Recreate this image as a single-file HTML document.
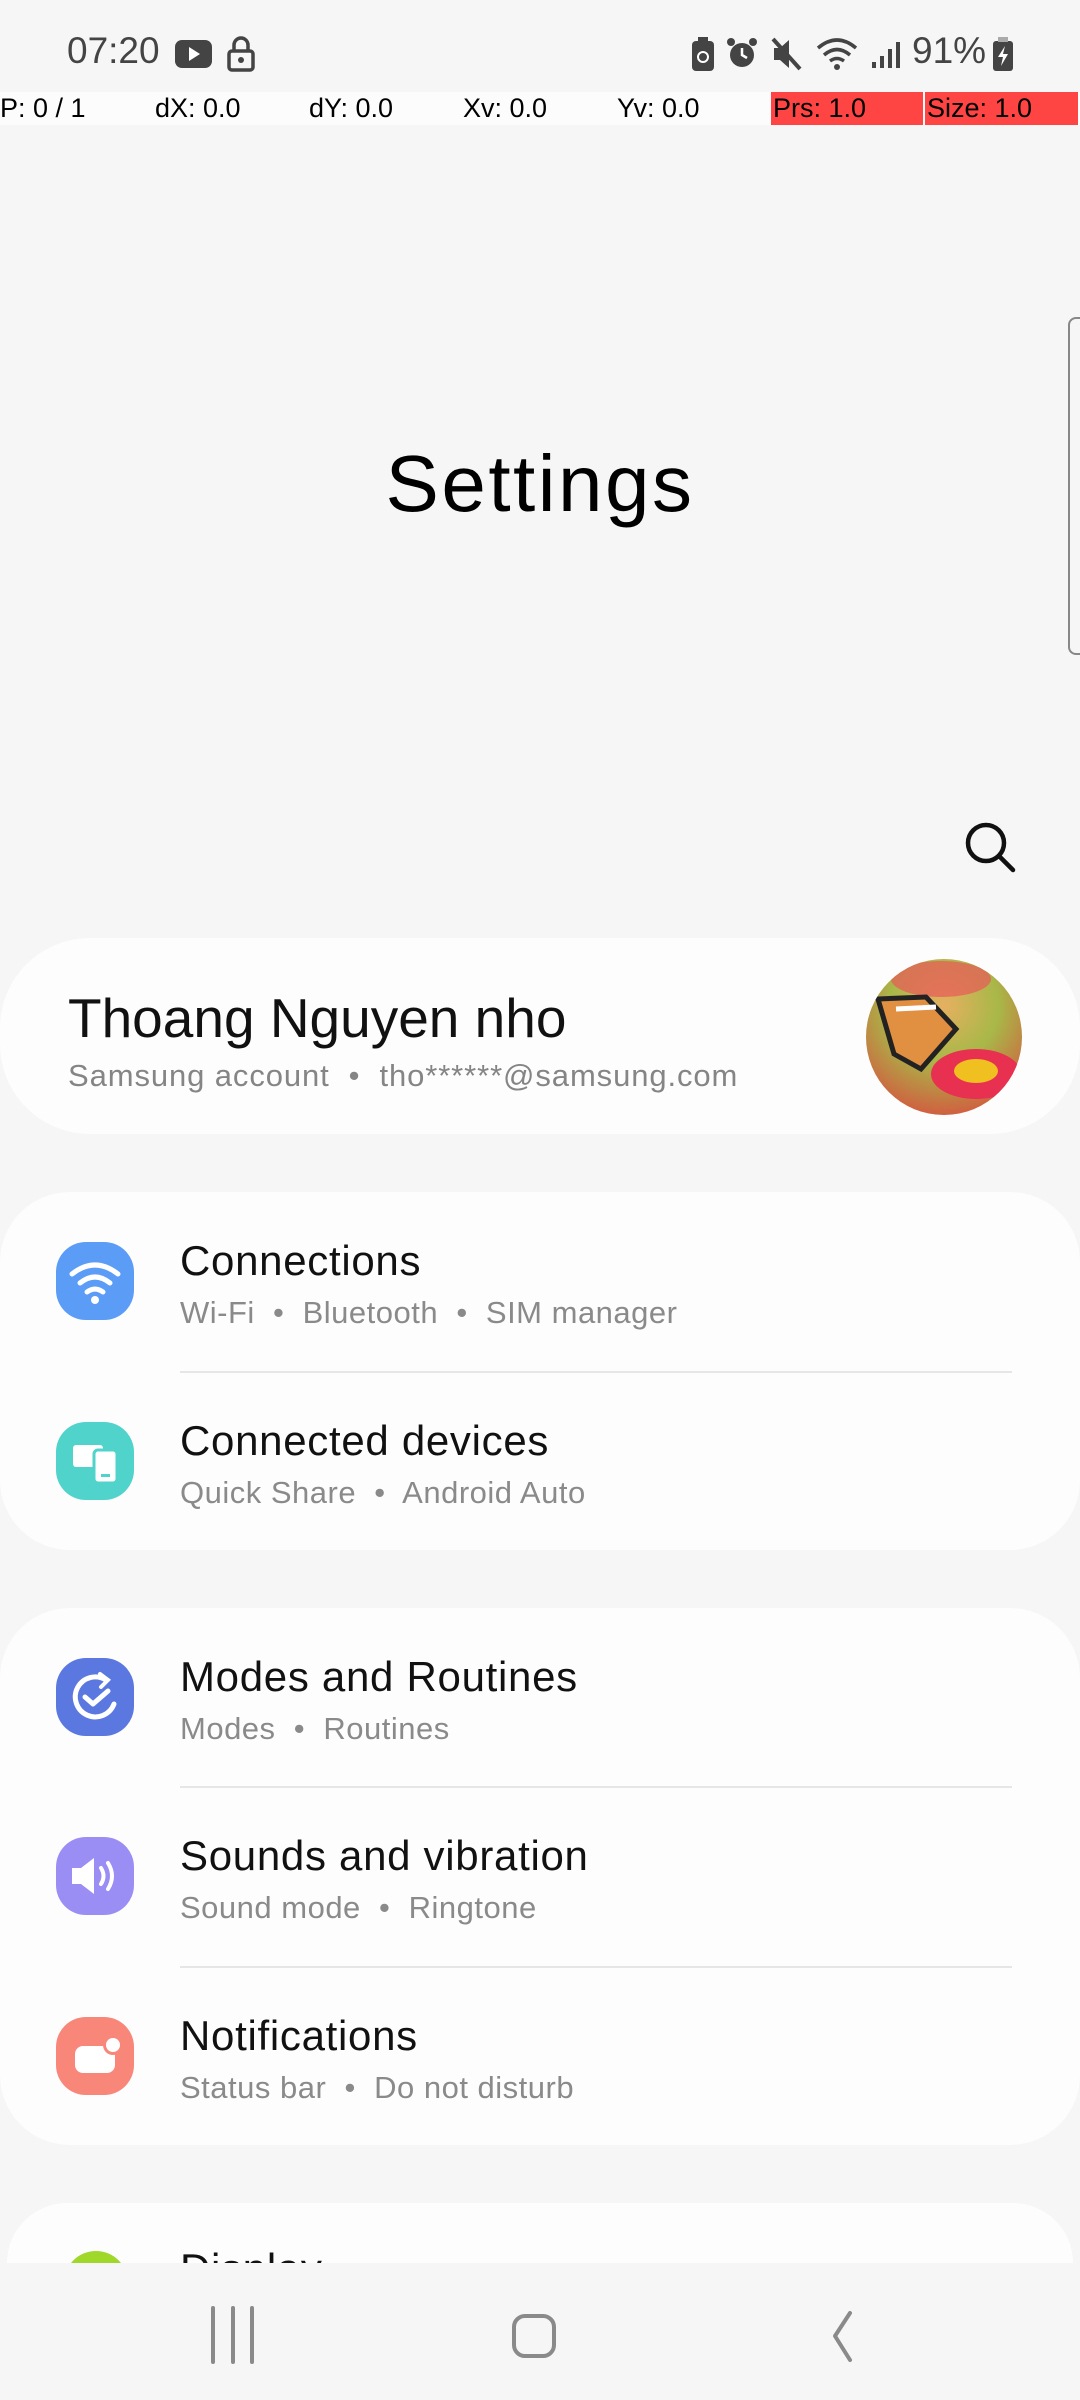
<!DOCTYPE html>
<html><head><meta charset="utf-8">
<style>
*{margin:0;padding:0;box-sizing:border-box}
body{width:1080px;height:2400px;background:#f6f6f6;font-family:"Liberation Sans",sans-serif;position:relative;overflow:hidden;color:#000}
.abs{position:absolute}
.card{position:absolute;left:0;width:1080px;background:#fdfdfd;border-radius:70px}
.t{position:absolute;left:180px;font-size:42px;color:#111;white-space:nowrap;letter-spacing:0.7px}
.s{position:absolute;left:180px;font-size:31px;color:#8a8a8a;white-space:nowrap;letter-spacing:0.5px}
.ic{position:absolute;left:56px;width:78px;height:78px;border-radius:30px}
.div{position:absolute;left:180px;width:832px;height:2px;background:#e6e6e6}
.dbg{position:absolute;top:92px;height:33px;font-size:27px;line-height:33px;color:#000;background:#fcfcfc}
</style></head><body>
<!-- status bar -->
<div class="abs" style="left:67px;top:30px;font-size:37px;color:#444">07:20</div>
<svg class="abs" style="left:174px;top:38px" width="40" height="32"><rect x="1" y="2" width="37" height="28" rx="7" fill="#444"/><path d="M15 9 L26 16 L15 23Z" fill="#fff"/></svg>
<svg class="abs" style="left:226px;top:34px" width="30" height="38"><path d="M8 17 V11 a7 7 0 0 1 14 0 V17" fill="none" stroke="#444" stroke-width="3.5"/><rect x="3" y="17" width="24" height="19" rx="3" fill="none" stroke="#444" stroke-width="3.5"/><circle cx="15" cy="26" r="3" fill="#444"/></svg>
<svg class="abs" style="left:690px;top:36px" width="26" height="36"><rect x="2" y="5" width="22" height="30" rx="4" fill="#444"/><rect x="8" y="1" width="10" height="5" fill="#444"/><circle cx="13" cy="21" r="5" fill="none" stroke="#fff" stroke-width="2"/></svg>
<svg class="abs" style="left:725px;top:36px" width="34" height="36"><circle cx="17" cy="19" r="12" fill="#444"/><path d="M17 12 V19 L22 22" stroke="#fff" stroke-width="2.5" fill="none"/><circle cx="6" cy="6" r="4" fill="#444"/><circle cx="28" cy="6" r="4" fill="#444"/></svg>
<svg class="abs" style="left:770px;top:36px" width="34" height="36"><path d="M4 12 H10 L19 4 V32 L10 24 H4Z" fill="#444"/><path d="M3 3 L30 33" stroke="#444" stroke-width="4"/></svg>
<svg class="abs" style="left:815px;top:36px" width="44" height="36"><path d="M3 12 Q22 -4 41 12" fill="none" stroke="#444" stroke-width="3.5"/><path d="M9 19 Q22 8 35 19" fill="none" stroke="#444" stroke-width="3.5"/><path d="M15 25 Q22 20 29 25" fill="none" stroke="#444" stroke-width="3.5"/><circle cx="22" cy="31" r="3" fill="#444"/></svg>
<svg class="abs" style="left:870px;top:40px" width="32" height="30"><rect x="2" y="22" width="4" height="6" fill="#444"/><rect x="10" y="16" width="4" height="12" fill="#444"/><rect x="18" y="9" width="4" height="19" fill="#444"/><rect x="26" y="2" width="4" height="26" fill="#444"/></svg>
<div class="abs" style="left:912px;top:30px;font-size:37px;color:#444">91%</div>
<svg class="abs" style="left:990px;top:36px" width="26" height="36"><rect x="3" y="5" width="20" height="30" rx="3" fill="#444"/><rect x="8" y="1" width="10" height="5" fill="#aaa"/><path d="M15 10 L8 21 H13 L11 30 L18 18 H13Z" fill="#fff"/></svg>
<!-- debug bar -->
<div class="dbg" style="left:0;width:1080px"></div>
<div class="dbg" style="left:0">P: 0 / 1</div>
<div class="dbg" style="left:155px">dX: 0.0</div>
<div class="dbg" style="left:309px">dY: 0.0</div>
<div class="dbg" style="left:463px">Xv: 0.0</div>
<div class="dbg" style="left:617px">Yv: 0.0</div>
<div class="dbg" style="left:771px;width:152px;background:#f44;padding-left:2px">Prs: 1.0</div>
<div class="dbg" style="left:925px;width:153px;background:#f44;padding-left:2px">Size: 1.0</div>
<!-- scrollbar -->
<div class="abs" style="left:1068px;top:317px;width:14px;height:338px;border:2px solid #888;border-right:none;border-radius:8px 0 0 8px"></div>
<!-- title -->
<div class="abs" style="left:0;width:1080px;top:438px;text-align:center;font-size:80px;color:#000;letter-spacing:2.5px">Settings</div>
<svg class="abs" style="left:960px;top:818px" width="60" height="60"><circle cx="26" cy="25" r="18" fill="none" stroke="#111" stroke-width="4.5"/><path d="M39 38 L53 52" stroke="#111" stroke-width="4.5" stroke-linecap="round"/></svg>
<!-- account card -->
<div class="card" style="top:938px;height:196px;border-radius:90px"></div>
<div class="abs" style="left:68px;top:986px;font-size:55px;color:#111">Thoang Nguyen nho</div>
<div class="abs" style="left:68px;top:1058px;font-size:31px;color:#858585;letter-spacing:0.9px">Samsung account &nbsp;•&nbsp; tho******@samsung.com</div>
<svg class="abs" style="left:866px;top:959px" width="156" height="156">
<defs><radialGradient id="bg" cx="50%" cy="30%" r="70%"><stop offset="0" stop-color="#e6b060"/><stop offset="0.5" stop-color="#a8b848"/><stop offset="1" stop-color="#d06040"/></radialGradient><clipPath id="cp"><circle cx="78" cy="78" r="78"/></clipPath></defs>
<g clip-path="url(#cp)"><rect width="156" height="156" fill="url(#bg)"/><ellipse cx="75" cy="20" rx="50" ry="18" fill="#e85858" opacity=".7"/><ellipse cx="110" cy="115" rx="45" ry="25" fill="#e83050"/><ellipse cx="110" cy="112" rx="22" ry="12" fill="#f0c020"/><path d="M12 40 L60 38 L90 70 L55 110 L28 95Z" fill="#e09040" stroke="#222" stroke-width="5"/><path d="M30 50 L70 48" stroke="#fff" stroke-width="5"/></g></svg>
<!-- card 2 -->
<div class="card" style="top:1192px;height:358px"></div>
<div class="ic" style="top:1242px;background:#5b9cf6"></div>
<svg class="abs" style="left:56px;top:1242px" width="78" height="78"><path d="M16 32 Q39 14 62 32" fill="none" stroke="#fff" stroke-width="5" stroke-linecap="round"/><path d="M24 41 Q39 29 54 41" fill="none" stroke="#fff" stroke-width="5" stroke-linecap="round"/><path d="M31 50 Q39 44 47 50" fill="none" stroke="#fff" stroke-width="5" stroke-linecap="round"/><circle cx="39" cy="58" r="4" fill="#fff"/></svg>
<div class="t" style="top:1237px">Connections</div>
<div class="s" style="top:1295px">Wi-Fi &nbsp;•&nbsp; Bluetooth &nbsp;•&nbsp; SIM manager</div>
<div class="div" style="top:1371px"></div>
<div class="ic" style="top:1422px;background:#4fd3cb"></div>
<svg class="abs" style="left:56px;top:1422px" width="78" height="78"><rect x="17" y="23" width="30" height="22" rx="3" fill="#fff"/><rect x="38" y="28" width="23" height="33" rx="4" fill="#fff" stroke="#4fd3cb" stroke-width="3"/><rect x="45" y="52" width="9" height="3" fill="#4fd3cb"/></svg>
<div class="t" style="top:1417px">Connected devices</div>
<div class="s" style="top:1475px">Quick Share &nbsp;•&nbsp; Android Auto</div>
<!-- card 3 -->
<div class="card" style="top:1608px;height:537px"></div>
<div class="ic" style="top:1658px;background:#5a78e0"></div>
<svg class="abs" style="left:56px;top:1658px" width="78" height="78"><path d="M50 22 A20 20 0 1 0 58 46" fill="none" stroke="#fff" stroke-width="5" stroke-linecap="round"/><path d="M44 16 L52 22 L45 29" fill="none" stroke="#fff" stroke-width="4" stroke-linecap="round"/><path d="M29 39 L37 46 L52 33" fill="none" stroke="#fff" stroke-width="5" stroke-linecap="round" stroke-linejoin="round"/></svg>
<div class="t" style="top:1653px">Modes and Routines</div>
<div class="s" style="top:1711px">Modes &nbsp;•&nbsp; Routines</div>
<div class="div" style="top:1786px"></div>
<div class="ic" style="top:1837px;background:#9a8ef5"></div>
<svg class="abs" style="left:56px;top:1837px" width="78" height="78"><path d="M16 31 H25 L38 21 V57 L25 47 H16Z" fill="#fff"/><path d="M45 31 Q50 39 45 47" fill="none" stroke="#fff" stroke-width="4" stroke-linecap="round"/><path d="M52 26 Q60 39 52 52" fill="none" stroke="#fff" stroke-width="4" stroke-linecap="round"/></svg>
<div class="t" style="top:1832px">Sounds and vibration</div>
<div class="s" style="top:1890px">Sound mode &nbsp;•&nbsp; Ringtone</div>
<div class="div" style="top:1966px"></div>
<div class="ic" style="top:2017px;background:#f8877a"></div>
<svg class="abs" style="left:56px;top:2017px" width="78" height="78"><rect x="19" y="29" width="40" height="27" rx="8" fill="#fff"/><circle cx="57" cy="28" r="10" fill="#f8877a"/><circle cx="57" cy="28" r="7" fill="#fff"/></svg>
<div class="t" style="top:2012px">Notifications</div>
<div class="s" style="top:2070px">Status bar &nbsp;•&nbsp; Do not disturb</div>
<!-- card 4 partial -->
<div class="abs" style="left:0;top:2203px;width:1080px;height:60px;overflow:hidden">
<div class="abs" style="left:7px;top:0;width:1066px;height:130px;background:#fdfdfd;border-radius:60px"></div>
<div class="abs" style="left:64px;top:48px;width:64px;height:64px;border-radius:32px;background:#9fd82a"></div>
<div class="abs" style="left:180px;top:42px;font-size:42px;color:#111;letter-spacing:0.7px">Display</div>
</div>
<!-- nav -->
<div class="abs" style="left:0;top:2263px;width:1080px;height:137px;background:#f6f6f6"></div>
<svg class="abs" style="left:200px;top:2300px" width="70" height="70"><path d="M13 8 V62 M33 8 V62 M52 8 V62" stroke="#8a8a8a" stroke-width="4" stroke-linecap="round"/></svg>
<svg class="abs" style="left:500px;top:2300px" width="70" height="70"><rect x="14" y="16" width="40" height="40" rx="11" fill="none" stroke="#8a8a8a" stroke-width="4"/></svg>
<svg class="abs" style="left:805px;top:2300px" width="70" height="70"><path d="M45 13 L30 36 L45 60" fill="none" stroke="#8a8a8a" stroke-width="4" stroke-linecap="round" stroke-linejoin="round"/></svg>
</body></html>
